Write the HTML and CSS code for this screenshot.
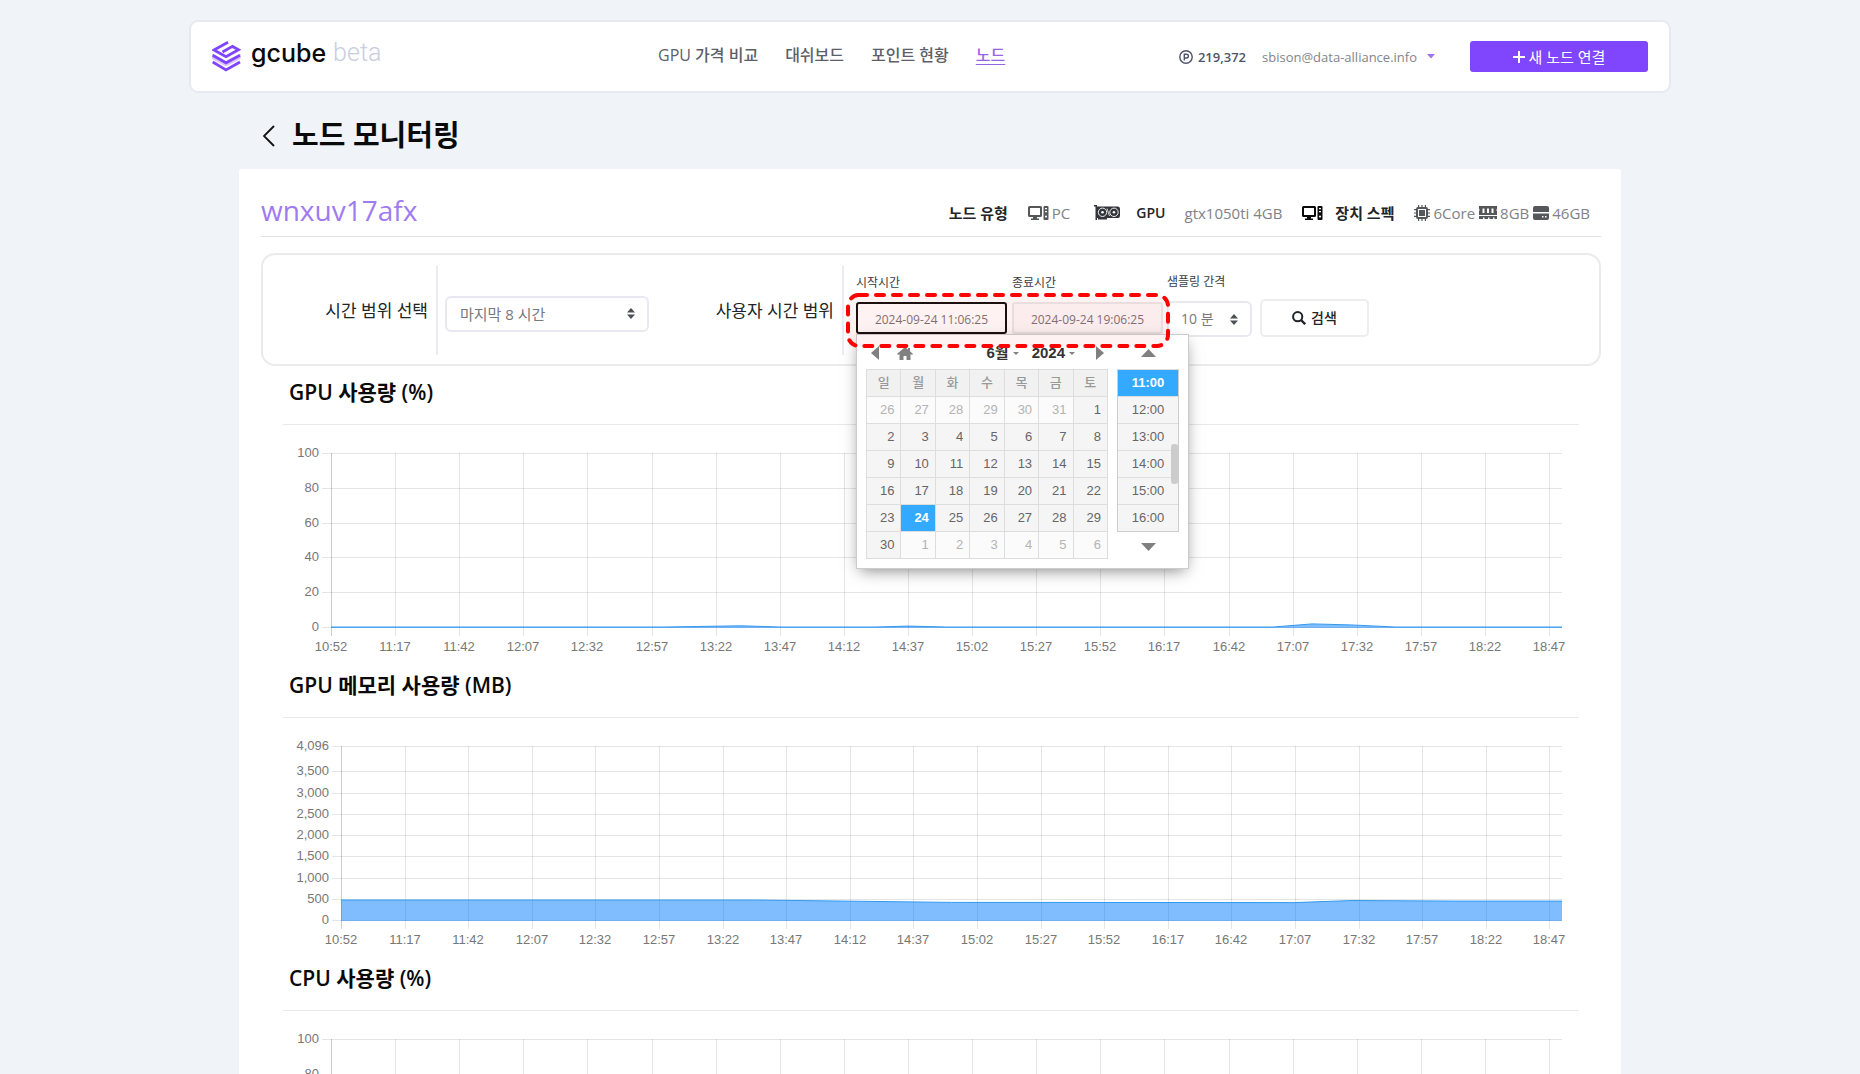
FILE: index.html
```html
<!DOCTYPE html>
<html lang="ko">
<head>
<meta charset="utf-8">
<meta name="viewport" content="width=device-width, initial-scale=1">
<title>gcube - 노드 모니터링</title>
<link rel="stylesheet" href="styles.css">
</head>
<body>
<svg class="sprite" aria-hidden="true">
  <symbol id="i-pc" viewBox="0 0 21 14">
    <path d="M0 1.500Q0 0 1.500 0H12.500Q14 0 14 1.500V9.500Q14 11 12.500 11H9V12.500H11V14H3V12.500H5V11H1.500Q0 11 0 9.500ZM2 2V9H12V2Z" fill-rule="evenodd"/>
    <path d="M15.500 1Q15.500 0 16.500 0H19.500Q20.500 0 20.500 1V13Q20.500 14 19.500 14H16.500Q15.500 14 15.500 13ZM17 2V3.300H19V2ZM17 5V6.300H19V5ZM18 9.500a1 1 0 1 0 .01 0Z" fill-rule="evenodd"/>
  </symbol>
  <symbol id="i-gpu" viewBox="0 0 26 15">
    <path d="M0 0H3V1.500H24Q26 1.500 26 4V10.500Q26 13 24 13H13V14.500H4V13H3V15H1.500V1.500H0Z"/>
    <g fill="none" stroke="#fff"><circle cx="8.500" cy="7.300" r="4.200" stroke-width=".9"/><circle cx="20" cy="7.300" r="4.200" stroke-width=".9"/><path d="M13 3.500L15.500 11" stroke-width=".8"/></g>
    <g fill="#fff"><circle cx="8.500" cy="7.300" r="1.300"/><circle cx="20" cy="7.300" r="1.300"/></g>
  </symbol>
  <symbol id="i-chip" viewBox="0 0 16 16">
    <path d="M4 2V0H5.200V2H7.400V0H8.600V2H10.800V0H12V2Q14 2 14 4H16V5.200H14V7.400H16V8.600H14V10.800H16V12H14Q14 14 12 14V16H10.800V14H8.600V16H7.400V14H5.200V16H4V14Q2 14 2 12H0V10.800H2V8.600H0V7.400H2V5.200H0V4H2Q2 2 4 2ZM4 4V12H12V4ZM5 5H11V11H5Z" fill-rule="evenodd"/>
  </symbol>
  <symbol id="i-ram" viewBox="0 0 18 13">
    <path d="M0 0H18V3Q16.500 4 18 5V9H0V5Q1.500 4 0 3ZM3.500 2.500V7H5.500V2.500ZM8 2.500V7H10V2.500ZM12.500 2.500V7H14.500V2.500ZM0 10H18V13H15.500V11.500H14V13H10.500V11.500H9V13H5.500V11.500H4V13H0Z" fill-rule="evenodd"/>
  </symbol>
  <symbol id="i-disk" viewBox="0 0 16 14">
    <path d="M2 0H14Q16 0 16 2V6H0V2Q0 0 2 0ZM0 7.500H16V12Q16 14 14 14H2Q0 14 0 12ZM9 10V11.500H10.500V10ZM12 10V11.500H13.500V10Z" fill-rule="evenodd"/>
  </symbol>
  <symbol id="i-sort" viewBox="0 0 8 11">
    <path d="M4 0L8 4.500H0ZM4 11L0 6.500H8Z"/>
  </symbol>
</svg>

<header class="topbar">
  <a class="brand" href="#">
    <svg class="brand-mark" viewBox="0 0 29 31" aria-hidden="true">
      <g fill="none" stroke="#8046fd" stroke-width="2.800">
        <path d="M16 1.300L2 8.900L14 15.700L26.500 8.700L20.500 5.400L10.500 11"/>
        <path d="M.7 14.300L14 21.800L28 14.300"/>
        <path d="M.7 21L14 28.900L28 21"/>
      </g>
      <path d="M0 12.800L14 20.500L28.500 12.800V18L14 25.500L0 18Z" fill="#8046fd" opacity=".3"/>
    </svg>
    <span class="brand-name">gcube</span>
    <span class="brand-tag">beta</span>
  </a>
  <nav class="menu">
    <a href="#">GPU 가격 비교</a>
    <a href="#">대쉬보드</a>
    <a href="#">포인트 현황</a>
    <a href="#" class="current">노드</a>
  </nav>
  <div class="account">
    <span class="points">
      <svg width="14" height="14" viewBox="0 0 14 14" aria-hidden="true"><g fill="none" stroke="#4d5466" stroke-width="1.400"><circle cx="7" cy="7" r="6.200"/><path d="M5.300 10.500V4.200H7.500a1.900 1.900 0 0 1 0 3.800H5.300"/></g></svg>
      219,372
    </span>
    <button type="button" class="user">sbison@data-alliance.info
      <svg width="8" height="5" viewBox="0 0 8 5" aria-hidden="true"><path d="M0 0H8L4 4.500Z" fill="#a071ee"/></svg>
    </button>
    <button type="button" class="connect">
      <svg width="12" height="12" viewBox="0 0 12 12" aria-hidden="true"><path d="M6 0V12M0 6H12" stroke="#fff" stroke-width="2"/></svg>
      새 노드 연결
    </button>
  </div>
</header>

<div class="page">
  <div class="heading">
    <a href="#" class="back" aria-label="뒤로"><svg width="12" height="22" viewBox="0 0 12 22" aria-hidden="true"><path d="M11 1L1 11L11 21" fill="none" stroke="#111" stroke-width="1.800"/></svg></a>
    <h1>노드 모니터링</h1>
  </div>

  <main class="panel">
    <div class="node">
      <h2>wnxuv17afx</h2>
      <div class="specs">
        <b class="spec-type">노드 유형</b>
        <span class="spec"><svg class="ic-pc"><use href="#i-pc"/></svg>PC</span>
        <svg class="ic-gpu"><use href="#i-gpu"/></svg>
        <b class="spec-gpu">GPU</b>
        <span class="spec model">gtx1050ti 4GB</span>
        <svg class="ic-pc dark"><use href="#i-pc"/></svg>
        <b class="spec-device">장치 스펙</b>
        <span class="spec"><svg class="ic-chip"><use href="#i-chip"/></svg>6Core</span>
        <span class="spec"><svg class="ic-ram"><use href="#i-ram"/></svg>8GB</span>
        <span class="spec"><svg class="ic-disk"><use href="#i-disk"/></svg>46GB</span>
      </div>
    </div>

    <form class="filters">
      <label class="side side-first" for="range">시간 범위 선택</label>
      <span class="picker range">
        <select id="range"><option>마지막 8 시간</option></select>
        <svg><use href="#i-sort"/></svg>
      </span>
      <span class="side side-second">사용자 시간 범위</span>
      <div class="fields">
        <div class="dates">
          <div class="field">
            <label for="from">시작시간</label>
            <input id="from" class="focused" type="text" value="2024-09-24 11:06:25">
          </div>
          <div class="field">
            <label for="to">종료시간</label>
            <input id="to" type="text" value="2024-09-24 19:06:25">
          </div>

          <div class="calendar">
            <div class="days">
              <div class="cal-head">
                <button type="button" aria-label="이전 달"><svg width="8" height="14" viewBox="0 0 8 14"><path d="M8 0V14L0 7Z"/></svg></button>
                <button type="button" class="home" aria-label="오늘"><svg width="16" height="13" viewBox="0 0 16 13"><path d="M8 0L11 2.500V1H13V4.200L16 7L15 8L13.500 7V13H9.500V9H6.500V13H2.500V7L1 8L0 7Z"/></svg></button>
                <button type="button" class="month">6월 <svg width="6" height="3" viewBox="0 0 6 3"><path d="M0 0H6L3 3Z"/></svg></button>
                <button type="button" class="year">2024 <svg width="6" height="3" viewBox="0 0 6 3"><path d="M0 0H6L3 3Z"/></svg></button>
                <button type="button" class="next" aria-label="다음 달"><svg width="8" height="14" viewBox="0 0 8 14"><path d="M0 0V14L8 7Z"/></svg></button>
              </div>
              <table>
                <thead><tr><th>일</th><th>월</th><th>화</th><th>수</th><th>목</th><th>금</th><th>토</th></tr></thead>
                <tbody>
                  <tr><td class="out">26</td><td class="out">27</td><td class="out">28</td><td class="out">29</td><td class="out">30</td><td class="out">31</td><td>1</td></tr>
                  <tr><td>2</td><td>3</td><td>4</td><td>5</td><td>6</td><td>7</td><td>8</td></tr>
                  <tr><td>9</td><td>10</td><td>11</td><td>12</td><td>13</td><td>14</td><td>15</td></tr>
                  <tr><td>16</td><td>17</td><td>18</td><td>19</td><td>20</td><td>21</td><td>22</td></tr>
                  <tr><td>23</td><td class="on">24</td><td>25</td><td>26</td><td>27</td><td>28</td><td>29</td></tr>
                  <tr><td>30</td><td class="out">1</td><td class="out">2</td><td class="out">3</td><td class="out">4</td><td class="out">5</td><td class="out">6</td></tr>
                </tbody>
              </table>
            </div>
            <div class="hours">
              <button type="button" class="step" aria-label="이전 시간"><svg width="15" height="8" viewBox="0 0 15 8"><path d="M0 8H15L7.500 0Z"/></svg></button>
              <ul>
                <li class="on">11:00</li><li>12:00</li><li>13:00</li><li>14:00</li><li>15:00</li><li>16:00</li>
              </ul>
              <button type="button" class="step" aria-label="다음 시간"><svg width="15" height="8" viewBox="0 0 15 8"><path d="M0 0H15L7.500 8Z"/></svg></button>
            </div>
          </div>

          <svg class="callout" aria-hidden="true"><rect x="2" y="2" width="320" height="51" rx="11"/></svg>
        </div>
        <div class="field">
          <label for="step">샘플링 간격</label>
          <span class="picker interval">
            <select id="step"><option>10 분</option></select>
            <svg><use href="#i-sort"/></svg>
          </span>
        </div>
        <button type="button" class="search"><svg width="14" height="14" viewBox="0 0 14 14" aria-hidden="true"><g fill="none" stroke="#212529"><circle cx="5.700" cy="5.700" r="4.600" stroke-width="2"/><path d="M9 9L13.200 13.200" stroke-width="2.400"/></g></svg> 검색</button>
      </div>
    </form>

    <section class="metric">
      <h3>GPU 사용량 (%)</h3>
      <svg class="chart" data-chart="gpu"></svg>
    </section>
    <section class="metric">
      <h3>GPU 메모리 사용량 (MB)</h3>
      <svg class="chart" data-chart="memory"></svg>
    </section>
    <section class="metric">
      <h3>CPU 사용량 (%)</h3>
      <svg class="chart" data-chart="cpu"></svg>
    </section>
  </main>
</div>
<script src="charts.js"></script>
</body>
</html>
```
FILE: styles.css
```css
* { box-sizing: border-box; }

body {
  margin: 0;
  background: #f0f4f9;
  color: #212529;
  font: 15px/20px "Open Sans", "Noto Sans CJK KR", sans-serif;
}

a { color: inherit; text-decoration: none; }
button, input, select { font: inherit; color: inherit; margin: 0; }
button { border: 0; padding: 0; background: none; cursor: pointer; }
.sprite { display: none; }

/* Top bar */
.topbar {
  display: flex;
  align-items: center;
  width: calc(100% - 32px);
  max-width: 1482px;
  height: 73px;
  margin: 20px auto 0;
  padding: 0 21px;
  background: #fff;
  border: 2px solid #e6e9f0;
  border-radius: 9px;
}
.brand { display: flex; align-items: center; flex: 0 1 446px; }
.brand-mark { width: 29px; height: 31px; margin-right: 10px; }
.brand-name { color: #0a0a0a; font: 500 25px/30px Inter, sans-serif; padding-bottom: 8px; }
.brand-tag { color: #c9cde0; font: 300 25px/30px Roboto, sans-serif; margin-left: 7px; padding-bottom: 8px; }
.menu { display: flex; gap: 27px; color: #5c6068; font-size: 16px; font-weight: 500; white-space: nowrap; padding-bottom: 4px; }
.menu .current { color: #9765e4; text-decoration: underline; text-underline-offset: 3px; }
.account { display: flex; align-items: center; margin-left: auto; white-space: nowrap; }
.points { display: flex; align-items: center; gap: 5px; color: #4f5666; font-size: 13px; font-weight: 600; }
.user { display: flex; align-items: center; gap: 10px; margin-left: 16px; color: #82858c; font-size: 13px; }
.connect {
  display: flex; align-items: center; justify-content: center; gap: 4px;
  width: 178px; height: 31px; margin-left: 35px;
  background: #8046fd; color: #fff; border-radius: 3px; font-size: 15px;
}

/* Page heading */
.page { width: calc(100% - 32px); max-width: 1382px; margin: 0 auto; }
.heading { display: flex; align-items: center; gap: 17px; height: 76px; padding: 10px 0 0 24px; }
.back { display: flex; }
h1 { margin: 0; color: #0a0a0a; font-size: 29px; line-height: 40px; font-weight: 700; padding-bottom: 3px; }

.panel { background: #fff; border-radius: 3px; padding: 20px 20px 40px 22px; }
.node {
  display: flex; justify-content: space-between; align-items: center;
  height: 48px; padding-right: 11px; border-bottom: 1px solid #e2e2e5;
}
h2 { margin: 0; color: #9f7bf0; font-size: 28px; line-height: 40px; font-weight: 400; padding-bottom: 6px; }
.specs { display: flex; align-items: center; gap: 4px; white-space: nowrap; }
.specs b { font-size: 15px; font-weight: 600; }
.spec { display: flex; align-items: center; gap: 3px; color: #808286; font-size: 15px; }
.specs svg { fill: #55575b; }
.specs .dark { fill: #0a0a0a; }
.specs .ic-gpu { fill: #33353a; }
.ic-pc { width: 21px; height: 14px; }
.ic-gpu { width: 26px; height: 15px; margin: 0 12px 0 20px; }
.ic-chip { width: 16px; height: 16px; }
.ic-ram { width: 18px; height: 13px; }
.ic-disk { width: 16px; height: 14px; }
.specs .spec-gpu { font-size: 14px; }
.spec-type { margin-right: 16px; }
.model { margin: 0 16px 0 15px; }
.spec-device { margin: 0 16px 0 8px; }

/* Filters */
.filters {
  display: flex; flex-wrap: wrap; align-items: stretch;
  margin-top: 16px; padding: 11px 0 9px;
  border: 2px solid #ebebed; border-radius: 14px;
}
.side {
  display: flex; align-items: center; justify-content: flex-end;
  height: 89px; padding-right: 8px;
  border-right: 2px solid #ebebf3;
  font-size: 17px; white-space: nowrap;
}
.side-first { width: 175px; }
.side-second { width: 195px; }
.picker { position: relative; display: flex; align-items: center; color: #77797f; }
.picker select {
  appearance: none; width: 100%; height: 36px; padding: 0 13px;
  background: #fff; border: 2px solid #e8e8f1; border-radius: 6px; font-size: 15px;
}
.picker svg { position: absolute; right: 14px; width: 8px; height: 11px; fill: #4d4f55; pointer-events: none; }
.range { width: 204px; margin-left: 7px; padding-top: 6px; }
.fields { display: flex; align-items: flex-end; padding: 0 0 18px 12px; }
.dates { position: relative; display: flex; gap: 5px; margin-right: 4px; padding-bottom: 3px; }
.field { display: flex; flex-direction: column; gap: 9px; }
.field label { color: #3b3d42; font-size: 12px; line-height: 20px; }
.field input {
  width: 151px; height: 32px; padding: 3px 0 0; text-align: center;
  background: #fbfafb; border: 2px solid #e9e9ea; border-radius: 3px;
  color: #7c7578; font-size: 12px; outline: 0;
}
.field .focused { background: #fff; border-color: #101010; }
.interval { width: 85px; }
.interval select { font-size: 14px; padding: 0 12px; }
.search {
  display: flex; align-items: center; justify-content: center; gap: 5px;
  width: 109px; height: 38px; margin-left: 8px;
  border: 2px solid #ededf0; border-radius: 5px; font-size: 14px; font-weight: 500;
}

/* Date and time picker */
.calendar {
  position: absolute; top: 61px; left: 0; z-index: 2;
  display: flex; gap: 9px;
  width: 333px; height: 235px; padding: 8px 9px;
  background: #fff; border: 1px solid #ccc;
  box-shadow: 0 5px 15px -4px rgba(0, 0, 0, .5);
  color: #666; font: 13px/26px "Liberation Sans", "Noto Sans CJK KR", sans-serif;
}
.calendar svg { fill: #808080; display: block; }
.days { width: 242px; }
.cal-head { display: flex; align-items: center; height: 26px; padding: 0 4px 6px 5px; }
.cal-head .home { margin-left: 18px; }
.cal-head .month { margin-left: auto; }
.month, .year { display: flex; align-items: center; gap: 4px; color: #333; font-size: 15px; font-weight: 700; line-height: 20px; }
.year { margin-left: 13px; }
.next { margin-left: 21px; }
.calendar table { width: 100%; table-layout: fixed; border-collapse: collapse; }
.calendar th, .calendar td { height: 27px; padding: 0 6px 0 0; border: 1px solid #ddd; background: #f5f5f5; line-height: 20px; }
.calendar th { padding: 0; background: #f1f1f1; color: #999; font-size: 13px; font-weight: 500; }
.calendar td { text-align: right; }
.calendar .out { background: #fbfbfb; color: #b3b3b3; }
.calendar .on { background: #33aaff; color: #fff; font-weight: 700; }
.hours { width: 62px; }
.step { display: flex; align-items: center; justify-content: center; width: 100%; height: 26px; padding-bottom: 6px; }
.hours ul { position: relative; margin: 0; padding: 0; list-style: none; border: 1px solid #ccc; border-top: 0; background: #f5f5f5; }
.hours li { height: 27px; border-top: 1px solid #ddd; text-align: center; }
.hours ul::after { content: ""; position: absolute; right: 0; top: 75px; width: 7px; height: 40px; border-radius: 3px; background: #ccc; }
.hours ul + .step { height: 26px; padding: 0; margin-top: 2px; }

.callout { position: absolute; left: -10px; top: 20px; z-index: 3; width: 324px; height: 56px; pointer-events: none; }
.callout rect { fill: rgba(255, 0, 0, .05); stroke: #f00; stroke-width: 4px; stroke-linecap: round; stroke-dasharray: 8 9; }

/* Charts */
.metric { margin: 0 22px; }
.filters + .metric { margin-top: 11px; }
h3 { margin: 0; padding: 0 0 17px 6px; border-bottom: 1px solid #e9e9ea; color: #0a0a0a; font-size: 21px; line-height: 30px; font-weight: 600; }
.chart { display: block; width: 100%; height: 245px; font: 13px "Liberation Sans", sans-serif; fill: #777; }
.grid { stroke: rgba(0, 0, 0, .1); }
.axis { stroke: rgba(0, 0, 0, .2); }
.area { fill: rgba(0, 123, 255, .5); }
.line { fill: none; stroke: #3399ef; stroke-width: 1px; }
```
FILE: charts.js
```js
const TIMES = ['10:52', '11:17', '11:42', '12:07', '12:32', '12:57', '13:22', '13:47', '14:12', '14:37',
  '15:02', '15:27', '15:52', '16:17', '16:42', '17:07', '17:32', '17:57', '18:22', '18:47'];

// Each point is [position in units of the 25-minute tick, value].
const CHARTS = {
  gpu: {
    left: 48, max: 100, ticks: [0, 20, 40, 60, 80, 100],
    points: [[0, 0], [5.2, 0], [6.4, 0.7], [7, 0], [8.5, 0], [9, 0.5], [9.6, 0], [14.7, 0], [15.3, 1.8], [15.9, 1.2], [16.6, 0], [19.2, 0]]
  },
  memory: {
    left: 58, max: 4096, ticks: [0, 500, 1000, 1500, 2000, 2500, 3000, 3500, 4096],
    points: [[0, 470], [6.5, 470], [9.6, 415], [15, 410], [15.9, 460], [17.5, 445], [19.2, 445]]
  },
  cpu: {
    left: 48, max: 100, ticks: [0, 20, 40, 60, 80, 100],
    points: [[0, 4], [19.2, 4]]
  }
};

const TOP = 28, BOTTOM = 202;

function draw(svg) {
  const c = CHARTS[svg.dataset.chart];
  const right = svg.clientWidth - 17;
  const x = i => c.left + i * (right - c.left) / 19.2;
  const y = v => BOTTOM - v / c.max * (BOTTOM - TOP);
  const snap = n => Math.round(n) + 0.5;
  const path = c.points.map(p => x(p[0]).toFixed(1) + ',' + y(p[1]).toFixed(1)).join(' L');
  let out = '';
  c.ticks.forEach(t => {
    out += `<line class="grid" x1="${c.left - 9}" x2="${right}" y1="${snap(y(t))}" y2="${snap(y(t))}"/>`;
    out += `<text x="${c.left - 12}" y="${Math.round(y(t)) + 4}" text-anchor="end">${t.toLocaleString('en-US')}</text>`;
  });
  TIMES.forEach((t, i) => {
    out += `<line class="${i ? 'grid' : 'axis'}" x1="${snap(x(i))}" x2="${snap(x(i))}" y1="${TOP}" y2="${BOTTOM + 9}"/>`;
    out += `<text x="${Math.round(x(i))}" y="${BOTTOM + 24}" text-anchor="middle">${t}</text>`;
  });
  out += `<path class="area" d="M${x(0)},${BOTTOM + 1} L${path} L${right},${BOTTOM + 1}Z"/><path class="line" d="M${path}"/>`;
  svg.innerHTML = out;
}

const drawAll = () => document.querySelectorAll('.chart').forEach(draw);
drawAll();
window.addEventListener('resize', drawAll);
```
